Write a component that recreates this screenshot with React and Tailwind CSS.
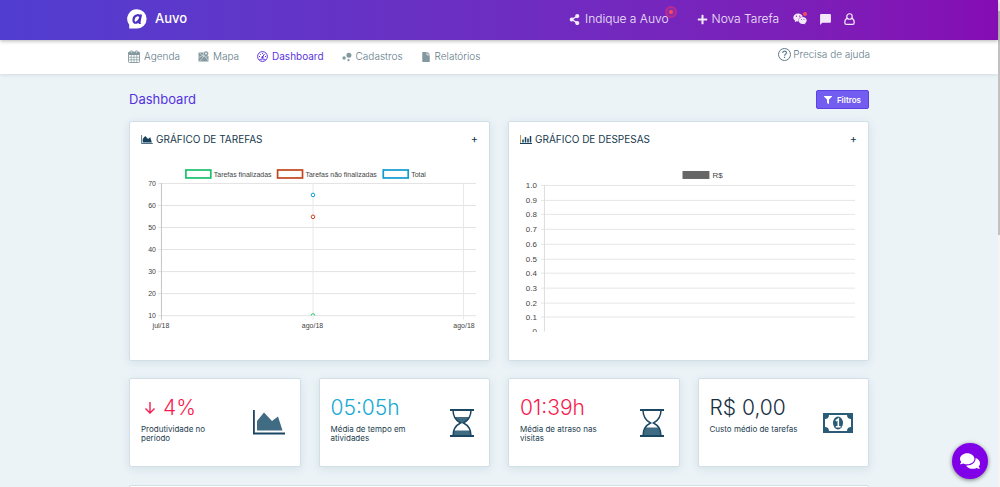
import React from "react";
import { FaShareAlt, FaPlus, FaWeixin, FaFilter, FaComments, FaFile } from "react-icons/fa";
import { MdChatBubble } from "react-icons/md";

function Logo() {
  return (
    <svg className="size-5" viewBox="0 0 20 20" aria-hidden="true">
      <path d="M10 .3a9.6 9.6 0 1 1 0 19.2H2.2v-3.800A9.600 9.600 0 0 1 10 .3z" fill="#fff" />
      <path
        d="M14 5.500 12.300 13.600M13.200 8.200c-.5-1.700-1.800-2.300-3.200-1.900-2.100.5-3.300 2.300-3.500 4.400-.2 2.300 1.100 3.500 2.900 2.900 1.600-.5 2.800-2 3.400-4M12.200 12.600c-.1 1.200.4 1.500 1.500 1.200"
        fill="none"
        stroke="#4b2fc4"
        strokeWidth="2.2"
      />
    </svg>
  );
}

function CalendarIcon() {
  return (
    <svg className="h-[13px] w-3" viewBox="0 0 24 26" fill="none" stroke="currentColor" aria-hidden="true">
      <rect x="1" y="4" width="22" height="21" rx="1.5" strokeWidth="1.8" />
      <path d="M1 7h22" strokeWidth="6" />
      <path d="M6.5 9v16M12 9v16M17.5 9v16M1 14.5h22M1 19.5h22" strokeWidth="1.4" />
      <path d="M7 1v6M17 1v6" strokeWidth="4" />
      <path d="M7 2v4M17 2v4" stroke="#fff" strokeWidth="1" />
    </svg>
  );
}

function MapIcon() {
  return (
    <svg className="size-[11px]" viewBox="0 0 22 22" aria-hidden="true">
      <path d="M1 3h13l7 8v10H1z" fill="currentColor" />
      <path d="M1 13 12 8l9 12M3 21 13 9M3 4l9 7" stroke="#fff" strokeWidth="1" fill="none" />
      <path d="M16 0a5 5 0 0 1 5 5c0 4-5 8-5 8s-5-4-5-8a5 5 0 0 1 5-5z" fill="currentColor" stroke="#fff" />
      <circle cx="16" cy="5" r="1.8" fill="#fff" />
    </svg>
  );
}

function GaugeIcon() {
  return (
    <svg className="size-[11px]" viewBox="0 0 22 22" fill="none" stroke="currentColor" strokeWidth="2" aria-hidden="true">
      <circle cx="11" cy="11" r="9.8" />
      <path d="M5 17.5c3-2 9-2 12 0M11 12l4-6M4 11h2M6 6l1.5 1.5M11 4v2M16 11h2" />
      <circle cx="11" cy="12.5" r="1.5" fill="currentColor" />
    </svg>
  );
}

function BubblesIcon() {
  return (
    <svg className="size-[10px]" viewBox="0 0 20 20" fill="currentColor" aria-hidden="true">
      <circle cx="13.8" cy="6.4" r="5" />
      <circle cx="4.2" cy="12" r="3.4" />
      <circle cx="13" cy="16.4" r="2.3" />
    </svg>
  );
}

function HelpIcon() {
  return (
    <svg className="size-[13px]" viewBox="0 0 26 26" fill="none" stroke="currentColor" aria-hidden="true">
      <circle cx="13" cy="13" r="12" strokeWidth="2" />
      <path d="M9.3 10c0-5 7.6-4.8 7.6-.5 0 3-3.8 3.2-3.8 6.2M13 17.7v2.500" strokeWidth="2.3" />
    </svg>
  );
}

function UserIcon() {
  return (
    <svg className="h-3 w-[11px]" viewBox="0 0 22 24" fill="none" stroke="currentColor" strokeWidth="2.4" aria-hidden="true">
      <circle cx="11" cy="7" r="5.500" />
      <path d="M6.400 10.500C3 12 1.500 15 1.500 19c0 2.500 1 3.800 3.500 3.800h12c2.500 0 3.500-1.300 3.500-3.800 0-4-1.500-7-4.900-8.500" />
    </svg>
  );
}

function AreaIcon({ className, areaClass = "" }) {
  return (
    <svg className={className} viewBox="0 0 32 25" fill="currentColor" aria-hidden="true">
      <path d="M0 0h1.800v22.500H32v2H0z" />
      <path className={areaClass} d="M4 20.500v-9.500L11 2.500l8 8.500 6-4.500 4.500 14z" />
    </svg>
  );
}

function BarIcon({ className }) {
  return (
    <svg className={className} viewBox="0 0 24 18" aria-hidden="true">
      <path d="M1 0v17" stroke="#c9974c" strokeWidth="2" />
      <path d="M0 17h24" stroke="#16405c" strokeWidth="2" />
      <path d="M6 9v6M11 4v11M16 7v8M21 2v13" stroke="#16405c" strokeWidth="3" />
    </svg>
  );
}

function Hourglass({ full }) {
  return (
    <svg className="h-7 w-6" viewBox="0 0 24 28" aria-hidden="true">
      {full && <path d="M4.500 8h15c-1 2.500-3 4.500-6 6h-3c-3-1.500-5-3.500-6-6z" fill="#3f6b83" />}
      <path d={full ? "M3 21.500h18V27H3z" : "M5.500 18.500h13c1.800 2 2.500 5 2.500 8H3c0-3 .7-6 2.500-8z"} fill="#3f6b83" />
      <path
        d="M3 1c0 6 2.500 10.500 7.500 13C5.500 16.500 3 21 3 27M21 1c0 6-2.500 10.500-7.500 13 5 2.500 7.500 7 7.500 13"
        fill="none"
        stroke="#1b4762"
        strokeWidth="1.5"
      />
      <path d="M0 1h24M0 27h24" stroke="#1b4762" strokeWidth="1.8" />
    </svg>
  );
}

function Banknote() {
  return (
    <svg className="h-5 w-[30px]" viewBox="0 0 30 20" aria-hidden="true">
      <rect width="30" height="20" fill="#2b5b77" />
      <path d="M6 2h18c0 2.500 1.500 4 4 4v8c-2.500 0-4 1.500-4 4H6c0-2.500-1.500-4-4-4V6c2.500 0 4-1.500 4-4z" fill="#fff" />
      <ellipse cx="15" cy="10" rx="5" ry="6.5" fill="#2b5b77" />
      <path d="M12.800 7.800 15.300 6v7.500M12.800 13.700h4.800" stroke="#fff" strokeWidth="1.6" fill="none" />
    </svg>
  );
}

const NAV = [
  { label: "Agenda", icon: CalendarIcon },
  { label: "Mapa", icon: MapIcon },
  { label: "Dashboard", icon: GaugeIcon, active: true },
  { label: "Cadastros", icon: BubblesIcon },
  { label: "Relatórios", icon: FaFile },
];

function Header() {
  return (
    <header className="relative z-10 bg-linear-to-r from-[#503dd0] to-[#850cb3] text-white shadow-[0_1px_4px_rgba(0,0,0,0.3)]">
      <div className="mx-auto flex h-[38px] max-w-[744px] items-center justify-between">
        <a href="#" className="flex items-center gap-2 text-[13px] font-medium">
          <Logo />
          Auvo
        </a>
        <div className="flex items-center pr-4 text-[12px] font-light text-white/90">
          <a href="#" className="relative flex items-center gap-[5px]">
            <FaShareAlt className="size-[11px]" />
            Indique a Auvo
            <span className="absolute -top-1 -right-2 flex size-3 items-center justify-center rounded-full border-2 border-[#b92b91] bg-[#8b2bad]">
              <span className="size-1 rounded-full bg-[#fb4a5d]" />
            </span>
          </a>
          <button type="button" className="ml-7 flex items-center gap-1">
            <FaPlus className="size-[11px]" />
            Nova Tarefa
          </button>
          <button type="button" aria-label="Conversas" className="relative ml-[14px]">
            <FaWeixin className="size-[14px]" />
            <span className="absolute top-0 right-0 size-1 rounded-full bg-[#fb4a5d]" />
          </button>
          <button type="button" aria-label="Mensagens" className="ml-3">
            <MdChatBubble className="size-[13px]" />
          </button>
          <button type="button" aria-label="Perfil" className="ml-3">
            <UserIcon />
          </button>
        </div>
      </div>
      <div className="h-0.5" />
    </header>
  );
}

function Nav() {
  return (
    <nav className="bg-white shadow-[0_1px_3px_rgba(60,90,110,0.15)]">
      <div className="mx-auto flex h-[34px] max-w-[742px] items-center justify-between pb-px">
        <ul className="flex gap-[18px] text-[10px]">
          {NAV.map(({ label, icon: Icon, active }) => (
            <li key={label}>
              <a
                href="#"
                className={
                  active
                    ? "flex items-center gap-1 text-[#5b34dd]"
                    : "flex items-center gap-1 font-light text-[#5f7b88]"
                }
              >
                <span className={active ? "" : "text-[#84999f]"}>
                  <Icon />
                </span>
                {label}
              </a>
            </li>
          ))}
        </ul>
        <a href="#" className="flex items-center gap-0.5 pb-1 text-[10px] font-light text-[#5f7b88]">
          <HelpIcon />
          Precisa de ajuda
        </a>
      </div>
    </nav>
  );
}

function ChartCard({ icon, title, children }) {
  return (
    <section className="h-60 rounded-xs border border-[#d3dfe6] bg-white px-[11px] pt-[11px] shadow-[0_2px_8px_rgba(80,120,140,0.15)]">
      <div className="flex h-3 items-center justify-between">
        <h2 className="flex items-center gap-[3px] text-[10px] text-[#16384d]">
          {icon}
          {title}
        </h2>
        <button type="button" aria-label={"Expandir " + title} className="text-[11px] text-[#16384d]">
          +
        </button>
      </div>
      {children}
    </section>
  );
}

const TASK_TICKS = [70, 60, 50, 40, 30, 20, 10];

function TasksChart() {
  return (
    <svg className="mt-6 w-full font-['Liberation_Sans',sans-serif]" viewBox="0 0 338 166" fontSize="7" fill="#444" role="img" aria-label="Gráfico de tarefas">
      <g fill="#fff" strokeWidth="1.7">
        <rect x="45" y="1" width="25" height="8" stroke="#19c26b" />
        <rect x="137" y="1" width="25" height="8" stroke="#c4451c" />
        <rect x="243" y="1" width="25" height="8" stroke="#109bd0" />
      </g>
      <text x="73" y="8">Tarefas finalizadas</text>
      <text x="165" y="8">Tarefas não finalizadas</text>
      <text x="271" y="8">Total</text>
      {TASK_TICKS.map((tick, i) => (
        <g key={tick}>
          <path d={"M17 " + (14.5 + i * 22.1) + "H336"} stroke="#e3e3e3" />
          <text x="15" y={17 + i * 22.1} textAnchor="end">{tick}</text>
        </g>
      ))}
      <path d="M20.500 14v137" stroke="#c4c4c4" />
      <path d="M172.500 14v137M323.500 14v137" stroke="#e8e8e8" />
      <circle cx="172.5" cy="26" r="1.8" fill="#fff" stroke="#109bd0" />
      <circle cx="172.5" cy="48" r="1.8" fill="#fff" stroke="#c4451c" />
      <path d="M170.700 147a1.800 1.800 0 0 1 3.600 0" fill="#fff" stroke="#19c26b" />
      <g textAnchor="middle">
        <text x="20" y="159">jul/18</text>
        <text x="172" y="159">ago/18</text>
        <text x="324" y="159">ago/18</text>
      </g>
    </svg>
  );
}

const EXPENSE_TICKS = ["1.0", "0.9", "0.8", "0.7", "0.6", "0.5", "0.4", "0.3", "0.2", "0.1", "0"];

function ExpensesChart() {
  return (
    <svg className="mt-6 w-full font-['Liberation_Sans',sans-serif]" viewBox="0 0 338 163" fontSize="8" fill="#444" role="img" aria-label="Gráfico de despesas">
      <rect x="163" y="2" width="27" height="8" fill="#666" />
      <text x="193" y="9">R$</text>
      {EXPENSE_TICKS.map((tick, i) => (
        <g key={tick}>
          {i < 10 && <path d={"M21 " + (16.5 + Math.round(i * 14.7)) + "H336"} stroke="#e6e6e6" />}
          <text x="17" y={19 + Math.round(i * 14.7)} textAnchor="end">{tick}</text>
        </g>
      ))}
      <path d="M24.500 16v147" stroke="#ddd" />
    </svg>
  );
}

function StatCard({ value, color, label, icon, arrow }) {
  return (
    <section className="flex h-[89px] items-center justify-between rounded-xs border border-[#d3dfe6] bg-white pr-[15px] pl-[11px] shadow-[0_2px_8px_rgba(80,120,140,0.15)]">
      <div className="h-[53px] w-[92px]">
        <p className={"flex items-center gap-2 text-[21px] leading-6 font-light whitespace-nowrap " + color}>
          {arrow && (
            <svg className="ml-1 h-3 w-[10px]" viewBox="0 0 10 12" fill="none" stroke="currentColor" strokeWidth="1.4" aria-hidden="true">
              <path d="M5 0v11M.5 6.500 5 11l4.500-4.500" />
            </svg>
          )}
          {value}
        </p>
        <p className="pt-[5px] text-[8px] leading-[9px] text-[#24404f]">{label}</p>
      </div>
      {icon}
    </section>
  );
}

export default function App() {
  return (
    <div className="flex h-screen overflow-hidden bg-[#ebf3f7] font-['Inter','Open_Sans',sans-serif]">
      <div className="min-w-0 flex-1">
        <Header />
        <Nav />
        <main className="mx-auto max-w-[740px] pt-4">
          <div className="mb-3 flex h-[19px] items-center justify-between">
            <h1 className="text-[13px] text-[#5431e0]">Dashboard</h1>
            <button
              type="button"
              className="flex h-[19px] items-center gap-[5px] rounded-xs border border-[#5b41e6] bg-[#735df0] px-[7px] text-[8px] font-semibold text-white"
            >
              <FaFilter />
              Filtros
            </button>
          </div>
          <div className="grid grid-cols-2 gap-[18px]">
            <ChartCard icon={<AreaIcon className="h-[9px] w-3 text-[#16405c]" />} title="GRÁFICO DE TAREFAS">
              <TasksChart />
            </ChartCard>
            <ChartCard icon={<BarIcon className="h-[9px] w-3" />} title="GRÁFICO DE DESPESAS">
              <ExpensesChart />
            </ChartCard>
          </div>
          <div className="mt-[17px] grid grid-cols-4 gap-[18px]">
            <StatCard
              value="4%"
              arrow
              color="text-[#f71b50]"
              label="Produtividade no período"
              icon={<AreaIcon className="h-[25px] w-8 text-[#1b4762]" areaClass="text-[#3f6b83]" />}
            />
            <StatCard value="05:05h" color="text-[#16a9d2]" label="Média de tempo em atividades" icon={<Hourglass full />} />
            <StatCard value="01:39h" color="text-[#f71b50]" label="Média de atraso nas visitas" icon={<Hourglass />} />
            <StatCard value="R$ 0,00" color="text-[#17303f]" label="Custo médio de tarefas" icon={<Banknote />} />
          </div>
          <section className="mt-[18px] h-20 rounded-xs border border-[#d3dfe6] bg-white" />
        </main>
      </div>
      <div className="w-0.5 bg-[#f4f4f4] pt-[11px]">
        <div className="h-56 bg-[#c1c1c1]" />
      </div>
      <button
        type="button"
        aria-label="Abrir chat"
        className="fixed right-3 bottom-2 flex size-9 items-center justify-center rounded-full bg-[#8000e8] text-white shadow-[0_1px_4px_rgba(0,0,0,0.5)]"
      >
        <FaComments className="size-5" />
      </button>
    </div>
  );
}
